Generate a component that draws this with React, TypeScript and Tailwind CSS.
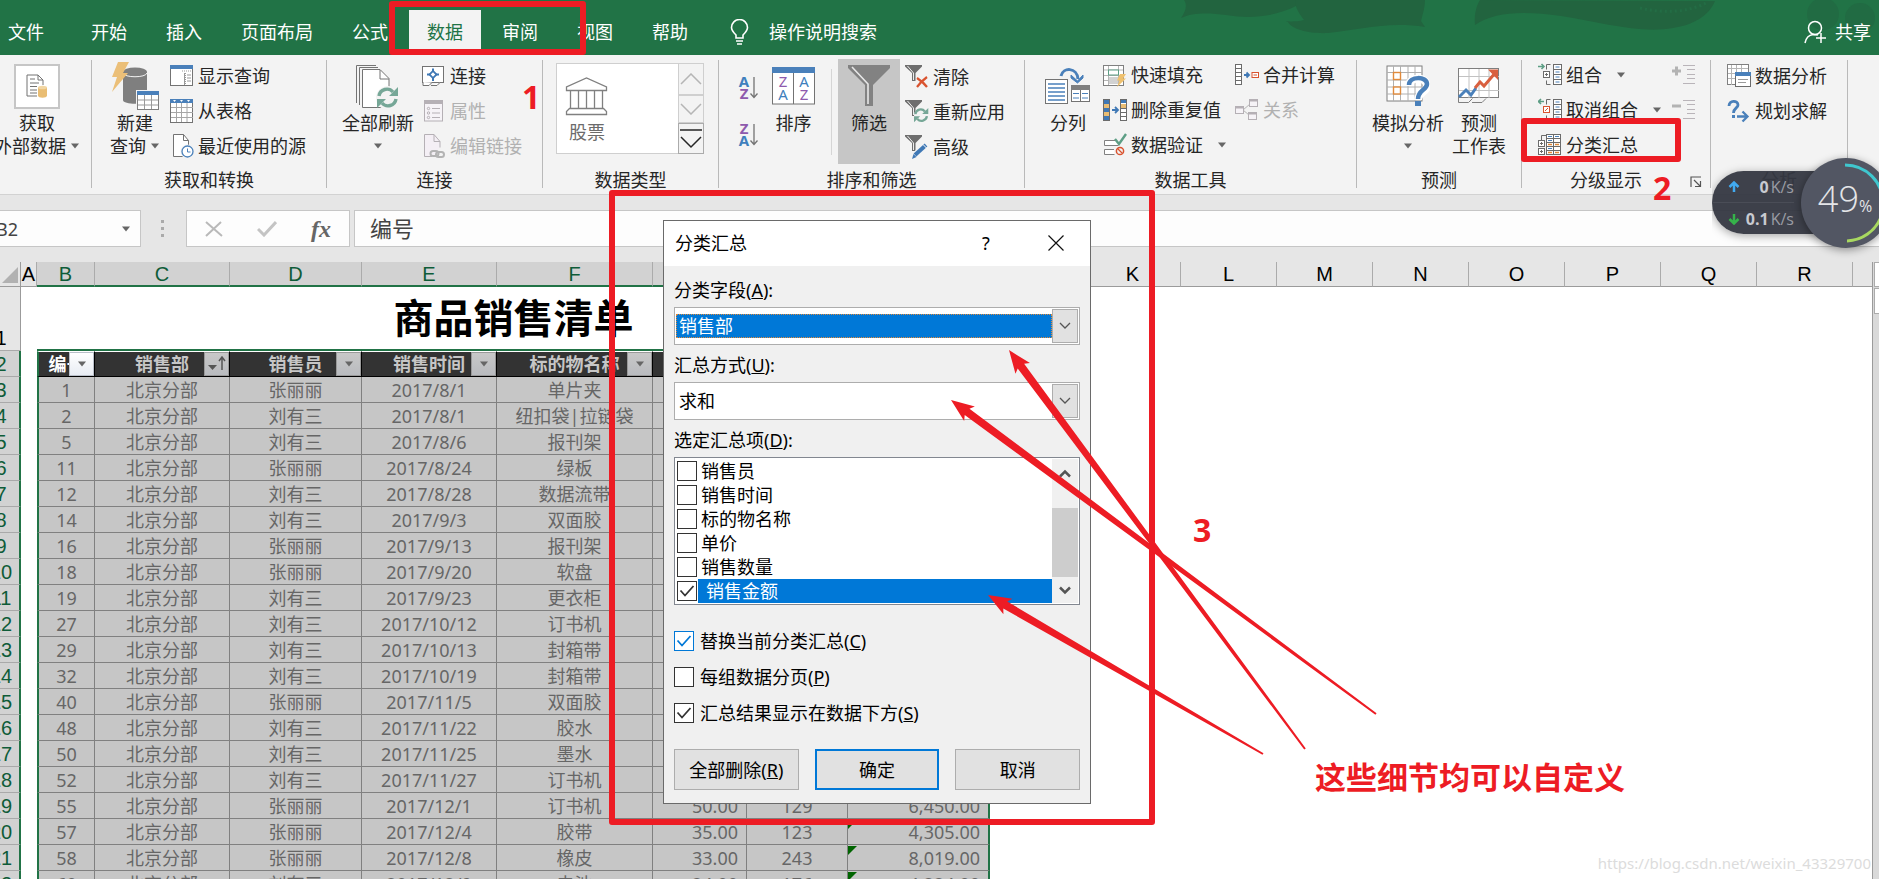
import { ReactNode } from "react"

type IconProps = { w: number, h: number, children: ReactNode }

const Icon = ({ w, h, children }: IconProps) => (
  <svg width={w} height={h} viewBox={`0 0 ${w} ${h}`} fill="none" className="block shrink-0" aria-hidden="true">
    {children}
  </svg>
)

const Caret = () => (
  <Icon w={10} h={6}><path d="M1 0.5h8L5 5.5z" fill="#666" /></Icon>
)

/* large ribbon icons */

const ExternalDataIcon = () => (
  <span className="flex h-[45px] w-[46px] items-center justify-center border-2 border-[#c6c6c6] bg-white">
    <Icon w={22} h={24}>
      <path d="M11 22H1V1h11l5 5v5" stroke="#737373" />
      <path d="M12 1v5h5M4 5h5M4 9h9M4 12.500h7M4 16h7M4 19h7" stroke="#737373" />
      <path d="M12 13.500v8c0 3 9 3 9 0v-8z" fill="#e9bd73" />
      <ellipse cx="16.500" cy="13.500" rx="4.500" ry="1.800" fill="#f2d6a3" />
    </Icon>
  </span>
)

const NewQueryIcon = () => (
  <Icon w={48} h={48}>
    <path d="M12 10v28c0 5 24 5 24 0V10z" fill="#7f7f7f" />
    <ellipse cx="24" cy="10" rx="12" ry="4.500" fill="#7f7f7f" />
    <path d="M12 11c1 5 23 5 24 0" stroke="#f3f3f3" />
    <path d="M7 0h11l-6 11h5L1 30l5-15H1z" fill="#ebbf78" />
    <rect x="25" y="28" width="23" height="20" fill="#f3f3f3" />
    <rect x="26.500" y="29.500" width="21" height="18" fill="#fff" stroke="#7f7f7f" />
    <rect x="26" y="29" width="22" height="4" fill="#4a80ba" />
    <path d="M33.500 33v14M40.500 33v14M27 38h20M27 43h20" stroke="#9a9a9a" />
  </Icon>
)

const RefreshArrows = () => (
  <>
    <path d="M2 9a8 8 0 0 1 14-4M19 12a8 8 0 0 1-14 4" stroke="#76a797" strokeWidth="3.400" />
    <path d="M21 0v9h-9zM0 21v-9h9z" fill="#76a797" />
  </>
)

const RefreshAllIcon = () => (
  <Icon w={46} h={48}>
    <path d="M1.500 41V3.500H21M4.500 43V5.500H23" stroke="#737373" />
    <path d="M7.500 45.500V7.500H25l9 9v29z" fill="#fff" stroke="#737373" />
    <path d="M25 8v9h9" stroke="#737373" />
    <circle cx="33" cy="36" r="12" fill="#f3f3f3" />
    <g transform="translate(22 25)"><RefreshArrows /></g>
  </Icon>
)

const StockIcon = () => (
  <Icon w={43} h={40}>
    <path d="M1.500 14.500v-3.500L21.500 2l20 9v3.500zM1.500 38.500v-3l3-3h34l3 3v3zM5.500 14.500v18M13.500 14.500v18M21.500 14.500v18M29.500 14.500v18M37.500 14.500v18" stroke="#808080" strokeWidth="1.300" />
  </Icon>
)

type LetterProps = { x: number, y: number, bold?: boolean }
const LetterA = ({ x, y, bold }: LetterProps) => (
  <text x={x} y={y} fontSize="15" fill="#3f7fbd" fontFamily="Noto Sans" fontWeight={bold ? 700 : 400} textAnchor="middle">A</text>
)
const LetterZ = ({ x, y, bold }: LetterProps) => (
  <text x={x} y={y} fontSize="15" fill="#8e5aad" fontFamily="Noto Sans" fontWeight={bold ? 700 : 400} textAnchor="middle">Z</text>
)

const SortArrowIcon = ({ desc }: { desc?: boolean }) => (
  <Icon w={22} h={24}>
    {desc ? <LetterZ x={6} y={11} bold /> : <LetterA x={6} y={11} bold />}
    {desc ? <LetterA x={6} y={23} bold /> : <LetterZ x={6} y={23} bold />}
    <path d="M16 1v20M12.500 17.500l3.500 4 3.500-4" stroke="#737373" strokeWidth="1.300" />
  </Icon>
)

const SortIcon = () => (
  <Icon w={43} h={38}>
    <rect x="0.500" y="1" width="42" height="36" fill="#fff" stroke="#737373" />
    <rect width="43" height="6" fill="#4a80ba" />
    <path d="M21.500 6v31" stroke="#737373" />
    <LetterZ x={11} y={20} /><LetterA x={11} y={33} />
    <LetterA x={32} y={20} /><LetterZ x={32} y={33} />
  </Icon>
)

const FilterIcon = () => (
  <Icon w={42} h={42}>
    <path d="M0 0h42v3L25 20v21h-8V20L0 3z" fill="#828282" />
    <path d="M4 2l16 17v20" stroke="#e8e8e8" strokeWidth="1.600" />
  </Icon>
)

const SplitColumnIcon = () => (
  <Icon w={46} h={38}>
    <rect x="0.500" y="12.500" width="22" height="24" fill="#fff" stroke="#737373" />
    <path d="M3 17h17M3 21h17M3 25h17M3 29h17M3 33h17" stroke="#4a80ba" strokeWidth="1.300" />
    <rect x="26.500" y="18.500" width="18" height="16" fill="#fff" stroke="#737373" />
    <rect x="26" y="18" width="19" height="5" fill="#7f7f7f" />
    <path d="M35.500 23v11" stroke="#737373" />
    <path d="M28 26.500h6M37 26.500h6M28 31h6M37 31h6" stroke="#4a80ba" />
    <path d="M16 9C18 0 32 0 33 12" stroke="#4a80ba" strokeWidth="3" />
    <path d="M26 8l6.500 6L38 8v3l-5.500 5L26 11z" fill="#4a80ba" stroke="#4a80ba" />
  </Icon>
)

const WhatIfIcon = () => (
  <Icon w={44} h={42}>
    <rect x="1" y="1" width="35" height="35" fill="#fff" stroke="#7f7f7f" />
    <path d="M7.500 1v35M14.500 1v35M22 1v35M29 1v35M1 7.500h35M1 15h35M1 22h35M1 29h35" stroke="#b0b0b0" />
    <rect x="7.500" y="7.500" width="7" height="7" fill="#fff" stroke="#e08a3c" strokeWidth="1.400" />
    <rect x="7.500" y="22" width="7" height="7" fill="#fff" stroke="#e08a3c" strokeWidth="1.400" />
    <path d="M23 21c0-10 18-10 18 0 0 6-9 6-9 14" stroke="#fff" strokeWidth="8" />
    <path d="M23 20c0-9 18-9 18-1 0 6-9 6-9 15" stroke="#4a80ba" strokeWidth="4.500" />
    <rect x="29" y="36" width="6" height="5" fill="#4a80ba" />
  </Icon>
)

const ForecastIcon = () => (
  <Icon w={42} h={36}>
    <rect x="0.500" y="0.500" width="40" height="29" fill="#fff" stroke="#7f7f7f" />
    <path d="M11 1v29M21 1v29M31 1v29M1 8.500h40M1 22.500h40" stroke="#c2c2c2" />
    <path d="M0.500 30v4.500h10l4-4M14 34.500h10l4-4" stroke="#7f7f7f" />
    <path d="M1 29l7-7 5 5 5-7" stroke="#4a80ba" strokeWidth="3" />
    <path d="M17 20l5-6 4 4L38 4" stroke="#d9603f" strokeWidth="3" />
    <path d="M30 1.500h10V12z" fill="#d9603f" />
  </Icon>
)

/* small ribbon icons, all on a 24px canvas */

const S = ({ children }: { children: ReactNode }) => <Icon w={24} h={24}>{children}</Icon>

const ShowQueryIcon = () => (
  <S>
    <rect x="0.500" y="1.500" width="22" height="20" fill="#fff" stroke="#737373" />
    <rect y="1" width="23" height="4" fill="#4a80ba" />
    <path d="M15.500 9v12M12 7h10" stroke="#999" strokeDasharray="1 1" />
    <path d="M17 11h4M17 14h4M17 17h4M14.500 9v12" stroke="#999" />
  </S>
)
const FromTableIcon = () => (
  <S>
    <rect x="0.500" y="0.500" width="22" height="23" fill="#fff" stroke="#737373" />
    <rect width="23" height="4" fill="#4a80ba" />
    <path d="M3 1h3L4.500 3zM10 1h3l-1.500 2zM17 1h3l-1.500 2z" fill="#fff" />
    <path d="M6.500 4v19M11.500 4v19M17 4v19M1 8.500h22M1 13.500h22M1 18.500h22" stroke="#a6a6a6" />
  </S>
)
const RecentIcon = () => (
  <S>
    <path d="M3.500 0.500h10l5 6v16h-15z" fill="#fff" stroke="#737373" />
    <path d="M13.500 0.500v6h5" stroke="#737373" />
    <circle cx="17.500" cy="17.500" r="7" fill="#f3f3f3" />
    <circle cx="17.500" cy="17.500" r="5.500" fill="#fff" stroke="#4a80ba" strokeWidth="1.300" />
    <path d="M17.500 14.500v3.500h3" stroke="#4a80ba" />
  </S>
)
const ConnectionIcon = () => (
  <S>
    <rect x="0.500" y="2.500" width="21" height="16" fill="#fff" stroke="#737373" />
    <path d="M1 18v3.500h6l3-3M9 21.500h6l3-3" stroke="#737373" fill="#fff" />
    <rect x="8.500" y="8" width="5" height="5" transform="rotate(45 11 10.500)" stroke="#3f78b5" strokeWidth="1.800" />
    <path d="M11 4.500v3M11 14v3M5 10.500h3M14 10.500h3" stroke="#3f78b5" strokeWidth="2" />
  </S>
)
const PropertiesIcon = () => (
  <S>
    <rect x="2.500" y="2" width="18" height="20" fill="#f6f3f7" stroke="#b5b0b5" />
    <rect x="2" y="1" width="19" height="4" fill="#b5b0b5" />
    <g stroke="#b5b0b5"><circle cx="6.500" cy="9.500" r="1.200" /><circle cx="6.500" cy="14" r="1.200" /><circle cx="6.500" cy="18.500" r="1.200" /><path d="M10 9.500h8M10 14h8M10 18.500h8" /></g>
  </S>
)
const EditLinksIcon = () => (
  <S>
    <path d="M10 22.500H2.500v-22H12l6 7v6" fill="#f4eff5" stroke="#b5b0b5" />
    <path d="M12 0.500v7h6" stroke="#b5b0b5" />
    <g stroke="#b3b3b3" strokeWidth="2"><rect x="8.500" y="17" width="8" height="5" rx="2.500" /><rect x="14" y="18" width="8" height="5" rx="2.500" /></g>
  </S>
)
const SmallFunnel = () => (
  <>
    <path d="M0 0h17v1.500L10.500 8v8H7V8L0 1.500z" fill="#6e6e6e" />
    <path d="M2.500 1L8.500 8v7" stroke="#eee" />
  </>
)
const ClearIcon = () => (
  <S><SmallFunnel /><path d="M12 13c3 2 7 5 10 9M22 12c-4 3-7 6-10 10" stroke="#d9532f" strokeWidth="2.200" /></S>
)
const ReapplyIcon = () => (
  <S><SmallFunnel /><circle cx="16" cy="15.500" r="7" fill="#f3f3f3" /><g transform="translate(9 8) scale(0.680)"><RefreshArrows /></g></S>
)
const AdvancedIcon = () => (
  <S><SmallFunnel /><path d="M9 21l11-11" stroke="#f3f3f3" strokeWidth="6" /><path d="M10 20L21 10" stroke="#3f78b5" strokeWidth="4" /><path d="M7 24l1.500-5 3 3z" fill="#3f78b5" /><path d="M18 9.500l4 4" stroke="#fff" /></S>
)
const FlashFillIcon = () => (
  <S>
    <rect x="0.500" y="2.500" width="20" height="20" fill="#fff" stroke="#808080" />
    <path d="M5.500 3v19M15.500 3v19M1 7h19M1 12.500h19M1 17.500h19" stroke="#b5b5b5" />
    <rect x="5.500" y="7" width="10" height="5" fill="#fff" stroke="#5d9e85" />
    <path d="M6 14h9v7H6z" fill="#d2d2d2" />
    <path d="M17 11h6l-3 4.500h3L14 24l2.500-6.500H14z" fill="#efc16f" />
  </S>
)
const RemoveDupIcon = () => (
  <S>
    <rect x="0.500" y="1.500" width="6" height="21" fill="#e9bd73" stroke="#6b6b6b" />
    <path d="M1 2h5v4H1zM1 10h5v4H1zM1 18h5v4H1z" fill="#3f78b5" />
    <rect x="17.500" y="1.500" width="6" height="21" fill="#fff" stroke="#6b6b6b" />
    <path d="M18 2h5v3h-5z" fill="#3f78b5" /><path d="M18 6h5v4h-5z" fill="#e9bd73" />
    <path d="M18 10.500h5M18 14.500h5M18 18.500h5" stroke="#6b6b6b" />
    <path d="M9 12h5M12 9l3 3-3 3" stroke="#3f78b5" strokeWidth="1.800" />
  </S>
)
const ValidationIcon = () => (
  <S>
    <path d="M12 7.500H1.500v5h14M11 16.500H1.500v5h10" stroke="#808080" fill="#fff" />
    <path d="M12 6l4 5 7-10" stroke="#5d9e85" strokeWidth="2.400" />
    <circle cx="17" cy="18" r="3.600" stroke="#d9532f" strokeWidth="1.500" /><path d="M14.500 15.500l5 5" stroke="#d9532f" strokeWidth="1.300" />
  </S>
)
const ConsolidateIcon = () => (
  <S>
    <rect x="0.500" y="1.500" width="6" height="20" fill="#fff" stroke="#6b6b6b" />
    <path d="M1 5.500h5M1 9.500h5M1 13.500h5M1 17.500h5" stroke="#6b6b6b" />
    <path d="M9 12h5M11.500 9.500L14 12l-2.500 2.500" stroke="#3f78b5" strokeWidth="1.800" />
    <rect x="17" y="9.500" width="6.500" height="5" fill="#fff" stroke="#d9532f" /><path d="M18.500 12h3.500" stroke="#d9532f" />
  </S>
)
const RelationIcon = () => (
  <S>
    <path d="M8 12l7-6M8 12l6 5" stroke="#b5b5b5" />
    <g fill="#f6f3f7" stroke="#b5b0b5"><rect x="0.500" y="8.500" width="8" height="7" /><rect x="14.500" y="1.500" width="8" height="7" /><rect x="13.500" y="14.500" width="8" height="7" /></g>
    <path d="M1 9.500h7M15 2.500h7M14 15.500h7" stroke="#b5b0b5" strokeWidth="2" />
  </S>
)
const GroupRows = () => (
  <>
    <rect x="15.500" y="1.500" width="8" height="20" fill="#fff" stroke="#6b6b6b" />
    <path d="M16 6.500h7M16 11.500h7M16 16.500h7" stroke="#6b6b6b" />
    <path d="M17.500 4h4M17.500 9h4M17.500 14h4M17.500 19h4" stroke="#4a80ba" />
    <path d="M12.500 1.500h-4v5M12.500 21.500h-4v-4" stroke="#6b6b6b" />
  </>
)
const GroupIcon = () => (
  <S><GroupRows /><rect x="5.500" y="8.500" width="6" height="6" fill="#fff" stroke="#6b6b6b" /><path d="M8.500 10v3M7 11.500h3" stroke="#6b6b6b" /><path d="M0 3.500h5M3.500 1L6 3.500 3.500 6" stroke="#5d9e85" strokeWidth="1.600" /></S>
)
const UngroupIcon = () => (
  <S><GroupRows /><rect x="5.500" y="8.500" width="6" height="6" fill="#fff" stroke="#d9532f" /><path d="M7 13l3-3" stroke="#d9532f" /><path d="M1 3.500h5M3 1L0.500 3.500 3 6" stroke="#5d9e85" strokeWidth="1.600" /></S>
)
const SubtotalIcon = () => (
  <S>
    <path d="M3.500 7V2.500h5" stroke="#6b6b6b" />
    <rect x="8.500" y="1.500" width="14" height="20" fill="#fff" stroke="#6b6b6b" />
    <path d="M15.500 2v20M9 5.500h14M9 9.500h14M9 13.500h14M9 17.500h14" stroke="#6b6b6b" />
    <path d="M10 3.500h4M17 3.500h4M10 7.500h4M10 15.500h4" stroke="#4a80ba" /><path d="M10 11.500h4M17 11.500h4M10 19.500h4M17 19.500h4" stroke="#e08a3c" strokeWidth="1.600" />
    <rect x="0.500" y="7.500" width="6" height="6" fill="#fff" stroke="#6b6b6b" /><rect x="0.500" y="15.500" width="6" height="6" fill="#fff" stroke="#6b6b6b" />
    <path d="M3.500 9v3M2 10.500h3M3.500 17v3M2 18.500h3" stroke="#6b6b6b" />
  </S>
)
const DetailIcon = ({ plus }: { plus?: boolean }) => (
  <S>
    <path d="M0 8h9" stroke="#b3b3b3" strokeWidth="3" />
    {plus && <path d="M4.500 3.500v9" stroke="#b3b3b3" strokeWidth="3" />}
    <path d="M11 2.500h12M15 6.500h8M15 11.500h8M15 15.500h8M11 20.500h12" stroke="#b9b4b9" />
  </S>
)
const AnalysisIcon = () => (
  <S>
    <rect x="0.500" y="0.500" width="21" height="20" fill="#fff" stroke="#808080" />
    <path d="M4.500 1v20M9.500 1v19M14.500 1v19M1 4.500h20M1 9.500h20M1 14.500h20" stroke="#b5b5b5" />
    <rect x="8.500" y="9.500" width="15" height="13" fill="#fff" stroke="#6b6b6b" /><rect x="8" y="8" width="16" height="4" fill="#4a80ba" />
    <path d="M11 15.500h10M11 18.500h8" stroke="#9a9a9a" />
  </S>
)
const SolverIcon = () => (
  <S>
    <path d="M2 7c0-6 9-6 9-1 0 3-4.500 3-4.500 8" stroke="#4a80ba" strokeWidth="2.800" /><rect x="5" y="16" width="3" height="3" fill="#4a80ba" />
    <path d="M10 17.500h9M15.500 12.500l5 5-5 5" stroke="#4a80ba" strokeWidth="2.300" />
  </S>
)

/* ribbon pieces */

const Divider = () => <div className="mt-[5px] h-32 w-px shrink-0 bg-[#b9b9b9]" />

type GroupProps = { width: string, label: string, children: ReactNode, corner?: boolean }
const Group = ({ width, label, children, corner }: GroupProps) => (
  <section className={`flex shrink-0 flex-col ${width}`}>
    <div className="flex h-[113px]">{children}</div>
    <div className="flex h-7 items-center">
      <h2 className="grow text-center">{label}</h2>
      {corner && (
        <button aria-label="分级显示设置" className="w-5 pt-1">
          <Icon w={12} h={12}><path d="M1 11V1h10M4 4l6 6M10.500 5v5.500H5" stroke="#555" strokeWidth="1.200" /></Icon>
        </button>
      )}
    </div>
  </section>
)

type BigProps = { icon: ReactNode, lines: string[], caret?: "below" | "inline", className?: string }
const BigButton = ({ icon, lines, caret, className = "" }: BigProps) => (
  <button className={`flex shrink-0 flex-col items-center self-start pt-1.5 whitespace-nowrap ${className}`}>
    <span className="flex h-[50px] items-center">{icon}</span>
    {lines.map((line, i) => (
      <span key={line} className="flex h-[23px] items-center gap-1">
        {line}
        {caret === "inline" && i === lines.length - 1 && <Caret />}
      </span>
    ))}
    {caret === "below" && <span className="flex h-[23px] items-center"><Caret /></span>}
  </button>
)

type SmallProps = { icon: ReactNode, label: string, caret?: boolean, disabled?: boolean }
const SmallButton = ({ icon, label, caret, disabled }: SmallProps) => (
  <button disabled={disabled} className="flex h-[35px] items-center gap-1 whitespace-nowrap disabled:text-[#b1b1b1]">
    {icon}
    {label}
    {caret && <span className="pl-2.5"><Caret /></span>}
  </button>
)

const tabs = ["开始", "插入", "页面布局", "公式", "数据", "审阅", "视图", "帮助"]

const TitleBar = () => (
  <header className="relative flex h-[55px] shrink-0 bg-[#217346] text-lg text-white">
    <svg className="absolute top-0 right-0" width="719" height="55" viewBox="0 0 719 55" aria-hidden="true">
      <g fill="#22643f">
        <path d="M24 0c4 6 1 12-3 18 12-6 30-5 45-3 24 4 48 2 70-9 10-4 14-4 18-6z" />
        <path d="M136 0c-2 5 2 12 8 20-12 3-22 0-16 2 4 8 24 12 40 11 30-3 60-12 97-6l-4-6c2-8 4-14 4-21z" />
        <path d="M320 0c-4 6-6 16-5 25 20-14 50-14 86-9 40 6 78 18 112 12 20-3 36-12 42-27z" />
      </g>
      <g fill="#216b43">
        <circle cx="663" cy="14" r="16" /><circle cx="700" cy="18" r="15" />
      </g>
      <path d="M480 8c24 6 50 4 68-6" stroke="#236d45" strokeWidth="3" strokeDasharray="2 3" fill="none" />
    </svg>
    <nav className="relative -ml-2.5 flex gap-[3px] pt-2.5">
      <button className="mr-2 h-[39px] px-[18px] pt-1 leading-9">文件</button>
      {tabs.map(tab => (
        <button
          key={tab}
          className={`h-[39px] px-[18px] pt-1 leading-9 ${tab === "数据" ? "bg-[#f3f3f3] text-[#217346]" : ""}`}
        >
          {tab}
        </button>
      ))}
    </nav>
    <button className="relative ml-6 flex items-center gap-5 pt-2">
      <Icon w={19} h={26}>
        <path d="M6 19v-3C3 13 1.500 11 1.500 8.500a8 8 0 0 1 16 0c0 2.500-1.500 4.500-4.500 7.500v3zM6 22h7M7 25h5" stroke="#fff" strokeWidth="1.600" />
      </Icon>
      操作说明搜索
    </button>
    <button className="relative ml-auto flex items-center gap-2 pt-2 pr-2">
      <Icon w={23} h={24}>
        <circle cx="11" cy="8" r="6.500" stroke="#fff" strokeWidth="1.500" />
        <path d="M1 23c1-5 4-8 8-8.500 2 0 4 0 5 .5M17 13v10M12 18h10" stroke="#fff" strokeWidth="1.500" />
      </Icon>
      共享
    </button>
  </header>
)

const Ribbon = () => (
  <div className="flex h-[140px] shrink-0 border-b border-[#d2d2d2] bg-[#f3f3f3] text-lg leading-6 text-[#262626]">
    <Group width="w-[91px]" label="">
      <BigButton className="-ml-1.5" icon={<ExternalDataIcon />} lines={["获取", "外部数据"]} caret="inline" />
    </Group>
    <Divider />
    <Group width="w-[234px]" label="获取和转换">
      <BigButton className="ml-4 w-[54px]" icon={<NewQueryIcon />} lines={["新建", "查询"]} caret="inline" />
      <div className="ml-2 flex flex-col pt-[3px]">
        <SmallButton icon={<ShowQueryIcon />} label="显示查询" />
        <SmallButton icon={<FromTableIcon />} label="从表格" />
        <SmallButton icon={<RecentIcon />} label="最近使用的源" />
      </div>
    </Group>
    <Divider />
    <Group width="w-[215px]" label="连接">
      <BigButton className="ml-[15px]" icon={<RefreshAllIcon />} lines={["全部刷新"]} caret="below" />
      <div className="ml-2 flex flex-col pt-[3px]">
        <SmallButton icon={<ConnectionIcon />} label="连接" />
        <SmallButton icon={<PropertiesIcon />} label="属性" disabled />
        <SmallButton icon={<EditLinksIcon />} label="编辑链接" disabled />
      </div>
    </Group>
    <Divider />
    <Group width="w-[175px]" label="数据类型">
      <div className="mt-2 ml-[13px] flex h-[91px] border border-[#cfcfcf] bg-white">
        <button className="flex w-[121px] flex-col items-start gap-1 pt-3 pl-2 text-[#6b6b6b]">
          <StockIcon />
          <span className="pl-1">股票</span>
        </button>
        <div className="-my-px -mr-px flex w-[26px] flex-col bg-[#f3f3f3]">
          <button aria-label="上一行" className="flex h-8 items-center justify-center border border-[#cfcfcf]">
            <Icon w={22} h={12}><path d="M1 11L11 1l10 10" stroke="#b5b5b5" strokeWidth="1.500" /></Icon>
          </button>
          <button aria-label="下一行" className="flex h-[29px] items-center justify-center border border-[#cfcfcf]">
            <Icon w={22} h={12}><path d="M1 1l10 10L21 1" stroke="#b5b5b5" strokeWidth="1.500" /></Icon>
          </button>
          <button aria-label="其他" className="flex h-[31px] items-center justify-center border border-[#ababab]">
            <Icon w={22} h={20}><path d="M0 1h22M1 8l10 10L21 8" stroke="#262626" strokeWidth="1.500" /></Icon>
          </button>
        </div>
      </div>
    </Group>
    <Divider />
    <Group width="w-[305px]" label="排序和筛选">
      <div className="ml-[19px] flex flex-col gap-[23px] pt-[21px]">
        <button aria-label="升序"><SortArrowIcon /></button>
        <button aria-label="降序"><SortArrowIcon desc /></button>
      </div>
      <BigButton className="ml-3" icon={<SortIcon />} lines={["排序"]} />
      <div className="mt-3.5 ml-4 h-[86px] w-px bg-[#d5d5d5]" />
      <div className="mt-1 ml-1.5 h-[105px] w-[62px] bg-[#c6c6c6]">
        <BigButton className="-mt-1 w-full" icon={<FilterIcon />} lines={["筛选"]} />
      </div>
      <div className="ml-[5px] flex flex-col pt-1">
        <SmallButton icon={<ClearIcon />} label="清除" />
        <SmallButton icon={<ReapplyIcon />} label="重新应用" />
        <SmallButton icon={<AdvancedIcon />} label="高级" />
      </div>
    </Group>
    <Divider />
    <Group width="w-[331px]" label="数据工具">
      <BigButton className="ml-5" icon={<SplitColumnIcon />} lines={["分列"]} />
      <div className="ml-3 flex flex-col pt-0.5">
        <SmallButton icon={<FlashFillIcon />} label="快速填充" />
        <SmallButton icon={<RemoveDupIcon />} label="删除重复值" />
        <SmallButton icon={<ValidationIcon />} label="数据验证" caret />
      </div>
      <div className="ml-2 flex flex-col pt-0.5">
        <SmallButton icon={<ConsolidateIcon />} label="合并计算" />
        <SmallButton icon={<RelationIcon />} label="关系" disabled />
      </div>
    </Group>
    <Divider />
    <Group width="w-[164px]" label="预测">
      <BigButton className="ml-[15px]" icon={<WhatIfIcon />} lines={["模拟分析"]} caret="below" />
      <BigButton className="ml-2" icon={<ForecastIcon />} lines={["预测", "工作表"]} />
    </Group>
    <Divider />
    <Group width="w-[188px]" label="分级显示" corner>
      <div className="ml-4 flex flex-col pt-0.5">
        <SmallButton icon={<GroupIcon />} label="组合" caret />
        <SmallButton icon={<UngroupIcon />} label="取消组合" caret />
        <SmallButton icon={<SubtotalIcon />} label="分类汇总" />
      </div>
      <div className="ml-2.5 flex flex-col pt-0.5">
        <button aria-label="显示明细数据" className="flex h-[35px] items-center"><DetailIcon plus /></button>
        <button aria-label="隐藏明细数据" className="flex h-[35px] items-center"><DetailIcon /></button>
      </div>
    </Group>
    <Divider />
    <Group width="w-[136px]" label="分析">
      <div className="ml-4 flex flex-col pt-[3px]">
        <SmallButton icon={<AnalysisIcon />} label="数据分析" />
        <SmallButton icon={<SolverIcon />} label="规划求解" />
      </div>
    </Group>
    <Divider />
  </div>
)

const FormulaBar = () => (
  <div className="flex h-[67px] shrink-0 bg-[#e6e6e6] py-[15px] text-[#444]">
    <div className="flex w-[141px] items-center border border-l-0 border-[#c6c6c6] bg-[#fdfdfd]">
      <input aria-label="名称框" defaultValue="B2" className="-ml-1 w-[125px] min-w-0 bg-transparent text-lg" />
      <Caret />
    </div>
    <div className="ml-5 flex w-[3px] flex-col justify-center gap-1">
      <span className="size-[3px] bg-[#aaa]" />
      <span className="size-[3px] bg-[#aaa]" />
      <span className="size-[3px] bg-[#aaa]" />
    </div>
    <div className="ml-[22px] flex w-[164px] items-center justify-between border border-[#c6c6c6] bg-[#fdfdfd] px-[18px]">
      <button aria-label="取消输入"><Icon w={18} h={16}><path d="M1 1l16 14M16 1L1 15" stroke="#b9b9b9" strokeWidth="2" /></Icon></button>
      <button aria-label="确认输入"><Icon w={20} h={16}><path d="M1 8l6 6L19 1" stroke="#c4c4c4" strokeWidth="3" /></Icon></button>
      <button className="font-['Liberation_Serif',serif] text-2xl font-bold italic text-[#666]">fx</button>
    </div>
    <input
      aria-label="编辑栏"
      defaultValue="编号"
      className="ml-1 min-w-0 grow border border-r-0 border-[#c6c6c6] bg-[#fdfdfd] pl-[15px] text-[22px]"
    />
  </div>
)

type Row = [string, string, string, string, string?, string?, string?]

const rows: Row[] = [
  ["1", "张丽丽", "2017/8/1", "单片夹"],
  ["2", "刘有三", "2017/8/1", "纽扣袋|拉链袋"],
  ["5", "刘有三", "2017/8/6", "报刊架"],
  ["11", "张丽丽", "2017/8/24", "绿板"],
  ["12", "刘有三", "2017/8/28", "数据流带"],
  ["14", "刘有三", "2017/9/3", "双面胶"],
  ["16", "张丽丽", "2017/9/13", "报刊架"],
  ["18", "张丽丽", "2017/9/20", "软盘"],
  ["19", "刘有三", "2017/9/23", "更衣柜"],
  ["27", "刘有三", "2017/10/12", "订书机"],
  ["29", "刘有三", "2017/10/13", "封箱带"],
  ["32", "刘有三", "2017/10/19", "封箱带"],
  ["40", "张丽丽", "2017/11/5", "双面胶"],
  ["48", "刘有三", "2017/11/22", "胶水"],
  ["50", "刘有三", "2017/11/25", "墨水"],
  ["52", "刘有三", "2017/11/27", "订书机"],
  ["55", "张丽丽", "2017/12/1", "订书机", "50.00", "129", "6,450.00"],
  ["57", "张丽丽", "2017/12/4", "胶带", "35.00", "123", "4,305.00"],
  ["58", "张丽丽", "2017/12/8", "橡皮", "33.00", "243", "8,019.00"],
  ["60", "刘有三", "2017/12/9", "电池", "24.00", "176", "4,224.00"],
]

const columns = [
  { name: "A", width: "w-4" },
  { name: "B", width: "w-[58px]" },
  { name: "C", width: "w-[135px]" },
  { name: "D", width: "w-[132px]" },
  { name: "E", width: "w-[135px]" },
  { name: "F", width: "w-[156px]" },
  { name: "G", width: "w-[94px]" },
  { name: "H", width: "w-[101px]" },
  { name: "I", width: "w-[142px]" },
  { name: "J", width: "w-[95px]" },
  ...["K", "L", "M", "N", "O", "P", "Q", "R"].map(name => ({ name, width: "w-24" })),
]
const fields = ["编号", "销售部", "销售员", "销售时间", "标的物名称", "单价", "销售数量", "销售金额"]

const RowHead = ({ n, selected }: { n: number, selected?: boolean }) => (
  <th
    scope="row"
    className={`overflow-hidden border-b p-0 font-['Liberation_Sans',sans-serif] text-xl leading-6 font-normal ${
      selected
        ? "border-r-2 border-b-[#a9a9a9] border-r-[#217346] bg-[#d2d2d2] text-[#0e5c38]"
        : "border-r border-b-[#a9a9a9] border-r-[#9b9b9b] bg-[#e6e6e6] align-bottom text-black"
    }`}
  >
    <div className="-ml-[19px] w-10">{n}</div>
  </th>
)

const cell = "overflow-hidden border-r border-b border-[#808080] bg-[#c6c6c6] p-0 leading-6 whitespace-nowrap"

const Sheet = () => (
  <table className="w-full table-fixed border-separate border-spacing-0 bg-white text-center text-lg text-[#666]">
    <colgroup>
      <col className="w-[21px]" />
      {columns.map(c => <col key={c.name} className={c.width} />)}
      <col />
    </colgroup>
    <thead className="bg-[#e6e6e6] font-['Liberation_Sans',sans-serif] text-xl leading-5 text-black">
      <tr className="h-[25px]">
        <td className="border-r border-b border-[#9b9b9b] p-0">
          <Icon w={19} h={22}><path d="M18 4v16H2z" fill="#b1b1b1" /></Icon>
        </td>
        {columns.map((c, i) => (
          <th
            key={c.name}
            scope="col"
            className={`border-r p-0 font-normal ${
              i > 0 && i < 9
                ? "border-b-2 border-r-[#ababab] border-b-[#217346] bg-[#d2d2d2] text-[#0e5c38]"
                : "border-b border-r-[#ababab] border-b-[#9b9b9b]"
            }`}
          >
            {c.name}
          </th>
        ))}
        <td className="border-b border-[#9b9b9b]" />
      </tr>
    </thead>
    <tbody>
      <tr className="h-16">
        <RowHead n={1} />
        <td />
        <td colSpan={8} className="border-b-2 border-[#217346] p-0 text-[40px] leading-none font-bold text-black">商品销售清单</td>
        <td colSpan={10} />
      </tr>
      <tr className="h-[26px]">
        <RowHead n={2} selected />
        <td />
        {fields.map((f, i) => (
          <th
            key={f}
            className={`relative overflow-hidden border-t border-r border-b border-t-white border-b-black bg-[#333] p-0 leading-6 whitespace-nowrap ${
              i === 0 ? "border-l-2 border-l-[#217346] text-white" : "text-[#c6c6c6]"
            } ${i === 7 ? "border-r-2 border-r-[#217346]" : "border-r-black"}`}
          >
            {f}
            <button
              aria-label={`筛选${f}`}
              className={`absolute top-0 right-0 flex h-6 w-[25px] items-center justify-center border ${
                i === 0 ? "border-[#b9bfc9] bg-linear-to-b from-white to-[#e8ecf3]" : "border-[#999] bg-linear-to-b from-[#c8c8c8] to-[#b9bbbf]"
              }`}
            >
              {i === 1
                ? <Icon w={20} h={16}><path d="M1 9h9l-4.500 5z" fill="#555" /><path d="M15 14V2M12 5l3-4 3 4" stroke="#555" strokeWidth="1.500" /></Icon>
                : <Caret />}
            </button>
          </th>
        ))}
        <td colSpan={10} />
      </tr>
      {rows.map(([id, seller, date, item, price, count, total], i) => (
        <tr key={id} className="h-[26px]">
          <RowHead n={i + 3} selected />
          <td />
          <td className={`${cell} border-l-2 border-l-[#217346]`}>{id}</td>
          <td className={cell}>北京分部</td>
          <td className={cell}>{seller}</td>
          <td className={cell}>{date}</td>
          <td className={cell}>{item}</td>
          <td className={`${cell} pr-2 text-right`}>{price}</td>
          <td className={cell}>{count}</td>
          <td className={`${cell} border-r-2 border-r-[#217346] text-right`}>
            <div className="flex items-start justify-between pr-2">
              <Icon w={9} h={9}><path d="M0 0h9L0 9z" fill="#006400" /></Icon>
              {total}
            </div>
          </td>
          <td colSpan={10} />
        </tr>
      ))}
    </tbody>
  </table>
)

const listItems = ["销售员", "销售时间", "标的物名称", "单价", "销售数量", "销售金额"]

type CheckProps = { id: string, defaultChecked?: boolean, blue?: boolean }
const Check = ({ id, defaultChecked, blue }: CheckProps) => (
  <span className="grid shrink-0 items-center justify-items-center">
    <input
      type="checkbox"
      id={id}
      defaultChecked={defaultChecked}
      className={`peer col-start-1 row-start-1 size-5 appearance-none border bg-white ${blue ? "border-[#0078d7]" : "border-[#333]"}`}
    />
    <span className="pointer-events-none col-start-1 row-start-1 hidden peer-checked:block">
      <Icon w={16} h={12}><path d="M1.500 5.500l4.500 5L14.500 1" stroke={blue ? "#0078d7" : "#333"} strokeWidth="1.800" /></Icon>
    </span>
  </span>
)

const ComboArrow = () => (
  <span className="flex w-[26px] items-center justify-center border border-[#adadad] bg-[#e1e1e1]">
    <Icon w={12} h={8}><path d="M1 1l5 5 5-5" stroke="#555" strokeWidth="1.300" /></Icon>
  </span>
)

const SubtotalDialog = () => (
  <form
    onSubmit={e => e.preventDefault()}
    className="absolute top-[220px] left-[663px] flex w-[428px] flex-col border border-[#6a6a6a] bg-[#f0f0f0] text-lg leading-6 text-black"
  >
    <div className="flex h-[45px] items-center bg-white pb-0.5 pl-[11px]">
      <h1 className="grow">分类汇总</h1>
      <button type="button" aria-label="帮助" className="w-10">?</button>
      <button type="button" aria-label="关闭" className="mr-5 ml-9 flex w-7 justify-center">
        <Icon w={16} h={16}><path d="M0.500 0.500l15 15M15.500 0.500l-15 15" stroke="#111" strokeWidth="1.200" /></Icon>
      </button>
    </div>
    <div className="flex flex-col px-2.5">
      <label htmlFor="field" className="mt-3 mb-[5px]">分类字段(<u>A</u>):</label>
      <div className="flex h-[38px] border border-[#adadad] bg-white p-px">
        <select id="field" className="my-auto h-6 grow appearance-none border border-dotted border-[#e08a3c] bg-[#0078d7] pl-0.5 leading-5 text-white outline-none">
          <option>销售部</option>
        </select>
        <ComboArrow />
      </div>
      <label htmlFor="method" className="mt-2 mb-[5px]">汇总方式(<u>U</u>):</label>
      <div className="flex h-[38px] border border-[#adadad] bg-white p-px">
        <select id="method" className="my-auto h-6 grow appearance-none pl-[3px] leading-5 outline-none">
          <option>求和</option>
        </select>
        <ComboArrow />
      </div>
      <span className="mt-2 mb-[5px]">选定汇总项(<u>D</u>):</span>
      <div className="flex h-[148px] border border-[#828790] bg-white p-px">
        <ul className="grow">
          {listItems.map((item, i) => (
            <li key={item} className="flex h-6 items-center gap-px pl-px">
              <Check id={`item${i}`} defaultChecked={i === 5} />
              <label htmlFor={`item${i}`} className={`grow ${i === 5 ? "bg-[#0078d7] pl-2 text-white" : "pl-[3px]"}`}>{item}</label>
            </li>
          ))}
        </ul>
        <div className="flex w-[26px] flex-col items-center bg-[#f0f0f0]">
          <span className="flex h-7 items-center"><Icon w={12} h={9}><path d="M1 7.500l5-5 5 5" stroke="#555" strokeWidth="2.500" /></Icon></span>
          <span className="mt-[21px] h-[69px] w-full bg-[#cdcdcd]" />
          <span className="flex grow items-center"><Icon w={12} h={9}><path d="M1 1.500l5 5 5-5" stroke="#555" strokeWidth="2.500" /></Icon></span>
        </div>
      </div>
      <div className="mt-6 flex flex-col gap-3">
        <div className="flex items-center gap-1.5">
          <Check id="replace" defaultChecked blue />
          <label htmlFor="replace">替换当前分类汇总(<u>C</u>)</label>
        </div>
        <div className="flex items-center gap-1.5">
          <Check id="page" />
          <label htmlFor="page">每组数据分页(<u>P</u>)</label>
        </div>
        <div className="flex items-center gap-1.5">
          <Check id="below" defaultChecked />
          <label htmlFor="below">汇总结果显示在数据下方(<u>S</u>)</label>
        </div>
      </div>
      <div className="mt-6 mb-[13px] grid h-[41px] grid-cols-3 gap-4">
        <button type="button" className="border border-[#adadad] bg-[#e1e1e1]">全部删除(<u>R</u>)</button>
        <button type="submit" className="border-2 border-[#0078d7] bg-[#e1e1e1]">确定</button>
        <button type="button" className="border border-[#adadad] bg-[#e1e1e1]">取消</button>
      </div>
    </div>
  </form>
)

const NetworkWidget = () => (
  <div className="absolute top-[157px] right-0 flex h-[91px] w-[167px] items-center overflow-x-clip font-['Open_Sans',sans-serif] text-[#c8cad0]">
    <div className="flex h-[63px] w-[150px] shrink-0 flex-col rounded-l-full bg-[#343741]/95 pr-[68px] shadow-[0_2px_10px_rgba(0,0,0,0.35)]">
      <div className="flex grow items-center justify-end gap-0.5 border-b border-[#4a4d57] text-base font-bold">
        <span className="mr-auto ml-4"><Icon w={12} h={12}><path d="M6 11V2M1.500 6L6 1.500 10.500 6" stroke="#41aaf0" strokeWidth="2.500" /></Icon></span>
        0<span className="font-normal text-[#9a9ca4]">K/s</span>
      </div>
      <div className="flex grow items-center justify-end gap-0.5 text-base font-bold">
        <span className="mr-auto ml-4"><Icon w={12} h={12}><path d="M6 1v9M1.500 6L6 10.500 10.500 6" stroke="#35b34a" strokeWidth="2.500" /></Icon></span>
        0.1<span className="font-normal text-[#9a9ca4]">K/s</span>
      </div>
    </div>
    <div className="-ml-[61px] grid size-[90px] shrink-0 rounded-full bg-[#525663] shadow-[0_2px_8px_rgba(0,0,0,0.4)]">
      <svg width="90" height="90" viewBox="0 0 90 90" fill="none" className="col-start-1 row-start-1" aria-hidden="true">
        <path d="M44 7a38 38 0 0 1 38 38" stroke="#3fc7cf" strokeWidth="3" />
        <path d="M46 83a38 38 0 0 0 34-24" stroke="#a8d860" strokeWidth="3" />
      </svg>
      <div className="col-start-1 row-start-1 flex items-baseline justify-center pt-4 pr-0.5 text-4xl leading-[50px] font-light text-[#e4e5e8]">
        49<span className="text-base font-normal">%</span>
      </div>
    </div>
  </div>
)

const arrows = [
  { tip: [1009, 350], tail: [1305, 749] },
  { tip: [951, 400], tail: [1376, 714] },
  { tip: [988, 595], tail: [1263, 754] },
]

// tapered shaft: wide at the head, thin at the tail
const arrowPoints = ([tx, ty]: number[], [ex, ey]: number[]) => {
  const len = Math.hypot(ex - tx, ey - ty)
  const ux = (ex - tx) / len
  const uy = (ey - ty) / len
  const at = (d: number, side: number) => `${tx + ux * d - uy * side},${ty + uy * d + ux * side}`
  return [at(0, 0), at(23, 9), at(20, 4), at(len, 1), at(len, -1), at(20, -4), at(23, -9)].join(" ")
}

const Annotations = () => (
  <div className="pointer-events-none absolute inset-0 text-[32px] leading-none font-bold text-[#ed1c24]">
    <div className="absolute top-px left-[389px] h-[54px] w-[197px] rounded-[3px] border-[6px] border-[#ed1c24]" />
    <div className="absolute top-[118px] left-[1521px] h-11 w-40 rounded-[3px] border-[6px] border-[#ed1c24]" />
    <div className="absolute top-[190px] left-[609px] h-[635px] w-[546px] rounded-[3px] border-[6px] border-[#ed1c24]" />
    <svg className="absolute inset-0 size-full" aria-hidden="true">
      {arrows.map(({ tip, tail }) => (
        <polygon key={tip[0]} points={arrowPoints(tip, tail)} fill="#ed1c24" />
      ))}
    </svg>
    <span className="absolute top-[81px] left-[522px]">1</span>
    <span className="absolute top-[172px] left-[1653px]">2</span>
    <span className="absolute top-[514px] left-[1193px]">3</span>
    <p className="absolute top-[762px] left-[1315px] text-[31px] whitespace-nowrap">这些细节均可以自定义</p>
    <span className="absolute right-2 bottom-2 text-[15px] font-normal text-[#dcdcdc]">https://blog.csdn.net/weixin_43329700</span>
  </div>
)

const App = () => {
  return (
    <div className="relative flex h-screen flex-col overflow-hidden bg-white font-['Noto_Sans','Noto_Sans_CJK_SC',sans-serif]">
      <TitleBar />
      <Ribbon />
      <FormulaBar />
      <main className="flex min-h-0 grow overflow-hidden bg-[#e6e6e6]">
        <div className="min-w-0 grow overflow-hidden"><Sheet /></div>
        <div className="flex w-[7px] shrink-0 flex-col border-l border-[#9b9b9b] bg-[#d9d9d9] pl-px">
          <span className="h-[25px] border border-r-0 border-[#ababab] bg-white" />
          <span className="mt-px h-[26px] border border-r-0 border-[#ababab] bg-white" />
        </div>
      </main>
      <SubtotalDialog />
      <NetworkWidget />
      <Annotations />
    </div>
  )
}

export default App
